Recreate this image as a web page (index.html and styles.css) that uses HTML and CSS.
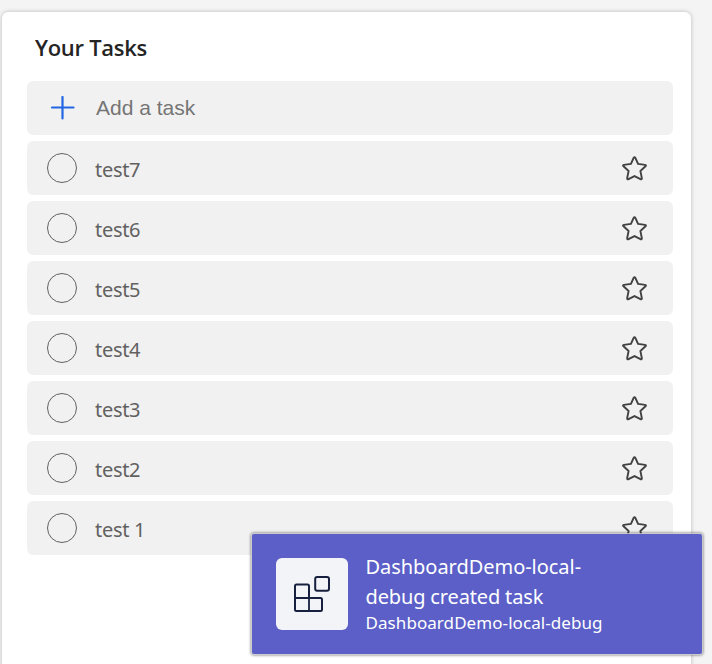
FILE: index.html
```html
<!DOCTYPE html>
<html lang="en">
<head>
<meta charset="utf-8">
<title>Your Tasks</title>
<link rel="stylesheet" href="styles.css">
</head>
<body>
<svg class="defs" aria-hidden="true">
  <symbol id="star" viewBox="0 0 28 28">
    <path d="M13.1 3Q14 1.5 14.9 3L17.7 9.2L25 10.2Q26.6 10.5 25.4 11.7L20.1 16.5L21.6 24Q21.7 25.7 20.2 25L14 21.8L7.8 25Q6.3 25.7 6.4 24L7.9 16.5L2.6 11.7Q1.4 10.5 3 10.2L10.3 9.2Z"/>
  </symbol>
</svg>
<main class="card">
  <h1 class="title">Your Tasks</h1>
  <div class="list">
    <div class="row add"><svg class="plus" viewBox="0 0 24 24"><path d="M11.5 1V22.5M1 11.5H22.5"/></svg><span class="placeholder">Add a task</span></div>
    <div class="row"><span class="check"></span><span class="name">test7</span><svg class="star"><use href="#star"/></svg></div>
    <div class="row"><span class="check"></span><span class="name">test6</span><svg class="star"><use href="#star"/></svg></div>
    <div class="row"><span class="check"></span><span class="name">test5</span><svg class="star"><use href="#star"/></svg></div>
    <div class="row"><span class="check"></span><span class="name">test4</span><svg class="star"><use href="#star"/></svg></div>
    <div class="row"><span class="check"></span><span class="name">test3</span><svg class="star"><use href="#star"/></svg></div>
    <div class="row"><span class="check"></span><span class="name">test2</span><svg class="star"><use href="#star"/></svg></div>
    <div class="row"><span class="check"></span><span class="name">test 1</span><svg class="star"><use href="#star"/></svg></div>
  </div>
</main>
<aside class="toast">
  <div class="app-icon">
    <svg viewBox="0 0 36 36">
      <path class="inner" d="M1 22H15M15 22V35"/>
      <path d="M2.5 8.5H13.5Q15 8.5 15 10V22H26.5Q28 22 28 23.5V33.5Q28 35 26.5 35H2.5Q1 35 1 33.5V10Q1 8.5 2.5 8.5Z"/>
      <rect x="21.2" y="1" width="13.8" height="13.8" rx="2"/>
    </svg>
  </div>
  <div class="message">
    <div class="line first">DashboardDemo-local-</div>
    <div class="line second">debug created task</div>
    <div class="source">DashboardDemo-local-debug</div>
  </div>
</aside>
</body>
</html>
```
FILE: styles.css
```css
* { box-sizing: border-box; }
body {
  margin: 0;
  height: 664px;
  overflow: hidden;
  position: relative;
  padding: 12px 21px 0 2px;
  background: #f4f4f4;
  font-family: "Noto Sans", "Open Sans", sans-serif;
}
.defs { position: absolute; width: 0; height: 0; }
.card {
  height: 680px;
  padding: 19px 18px 0 25px;
  background: #fff;
  border-radius: 6px;
  box-shadow: 0 0 4px rgba(0, 0, 0, .25);
}
.title {
  margin: 0 0 18px 8px;
  font: 600 22px/32px "Open Sans", "Noto Sans", sans-serif;
  letter-spacing: -.3px;
  color: #242424;
}
.list { display: flex; flex-direction: column; gap: 6px; }
.row {
  display: flex;
  align-items: center;
  height: 54px;
  padding: 0 25px 0 20px;
  border-radius: 6px;
  background: #f1f1f1;
}
.plus { width: 24px; height: 24px; margin: 0 21px 0 4px; }
.plus path { fill: none; stroke: #2266e3; stroke-width: 2.2; stroke-linecap: round; }
.placeholder { font: 21px/30px "Liberation Sans", Arial, sans-serif; color: #757575; }
.check {
  width: 30px;
  height: 30px;
  border: 1.3px solid #616161;
  border-radius: 50%;
}
.name {
  flex: 1;
  margin-left: 18px;
  padding-top: 3px;
  font-size: 20px;
  line-height: 30px;
  letter-spacing: -.3px;
  color: #616161;
}
.star { width: 27px; height: 27px; margin: 1px .5px 0 0; fill: none; stroke: #424242; stroke-width: 2; stroke-linejoin: round; }
.toast {
  position: absolute;
  left: 252px;
  top: 534px;
  width: 450px;
  height: 120px;
  display: flex;
  gap: 17.5px;
  padding: 18px 24px 17px;
  border-radius: 2px;
  background: #5b5fc7;
  box-shadow: 0 0 0 1px rgba(225, 225, 225, .7), 0 0 3px 1px rgba(0, 0, 0, .6);
  color: #fff;
}
.app-icon {
  width: 72px;
  height: 72px;
  margin-top: 6px;
  display: grid;
  place-items: center;
  border-radius: 6px;
  background: #f3f4f7;
}
.app-icon svg { width: 36px; height: 36px; fill: none; stroke: #17213f; stroke-width: 2; }
.app-icon .inner { stroke-width: 1.8; }
.message { white-space: nowrap; }
.line { font-size: 20px; line-height: 30px; }
.first { letter-spacing: -.04px; }
.second { letter-spacing: -.15px; }
.source { font-size: 17px; line-height: 21px; letter-spacing: .07px; }
```
